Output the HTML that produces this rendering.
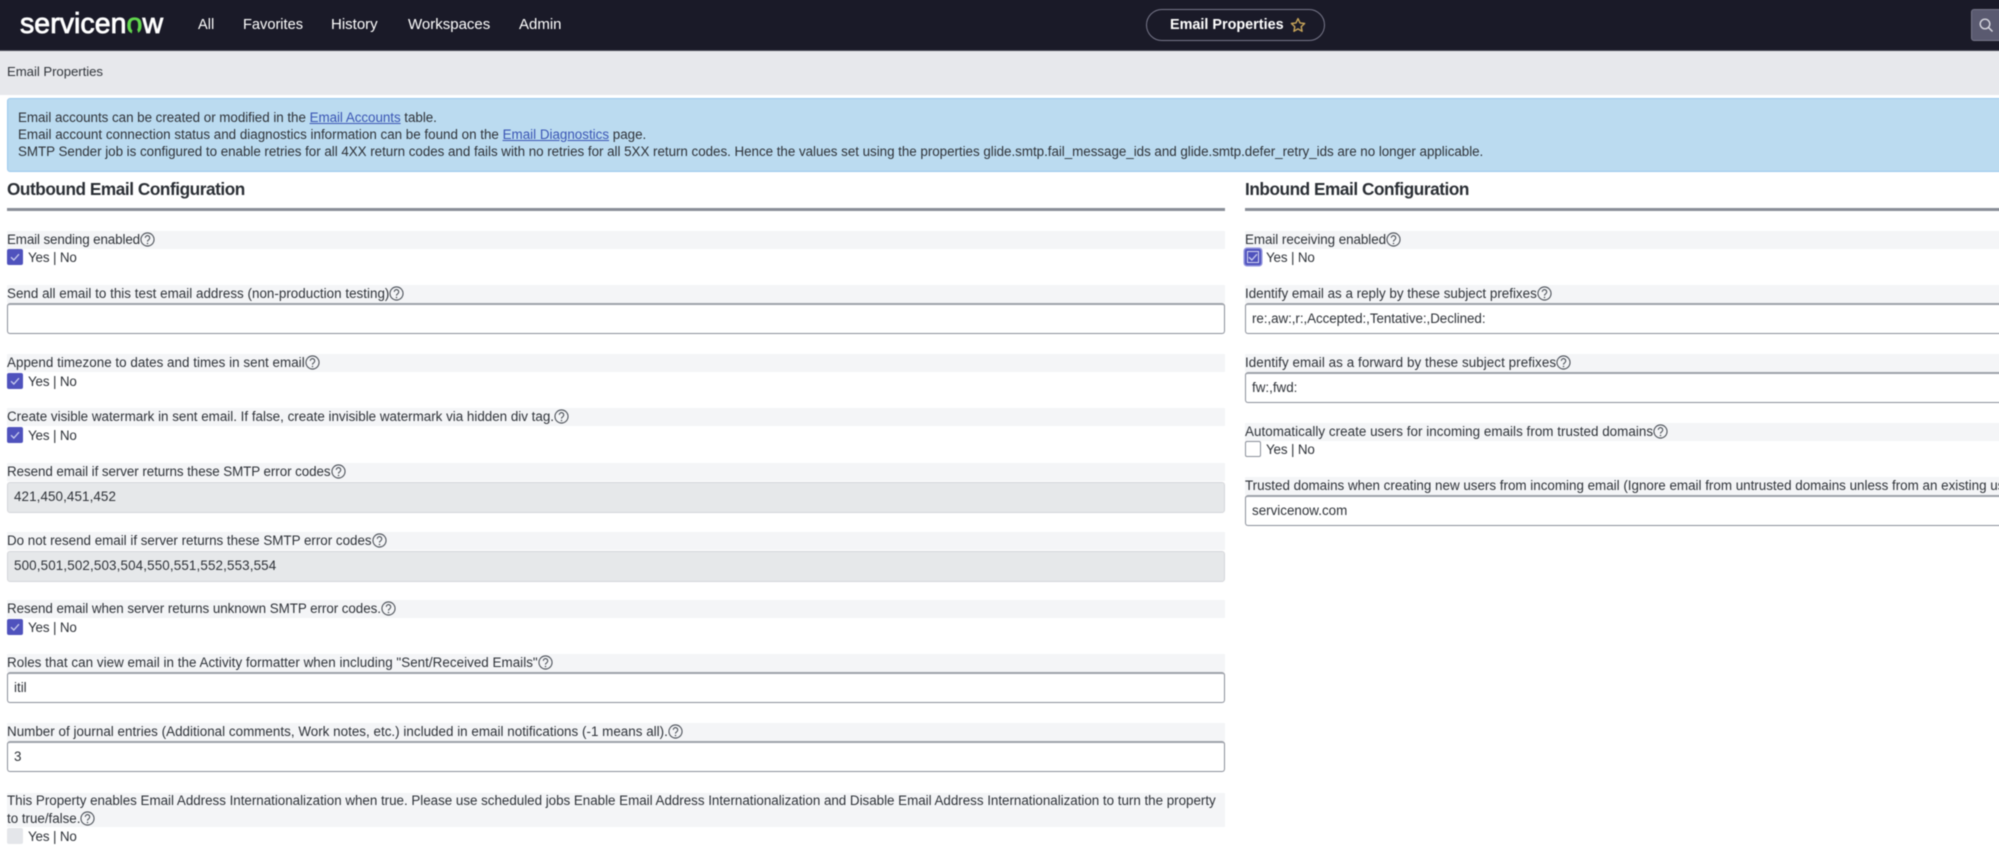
<!DOCTYPE html>
<html lang="en"><head><meta charset="utf-8"><title>Email Properties</title>
<style>
*{box-sizing:border-box}
html,body{margin:0;padding:0;width:1999px;height:860px;overflow:hidden;background:#fff}
body{font-family:"Liberation Sans",sans-serif;font-size:13.4px;color:#2e3238;position:relative}
#p{position:absolute;left:0;top:0;width:1999px;height:860px;filter:blur(.45px)}
#p div,#p span.a,#p svg.a{position:absolute;white-space:nowrap}
.nav{left:-6px;top:-6px;width:2015px;height:57px;background:#1a1a28;border-bottom:1px solid #4a4a55}
.ni{top:15px;color:#fff;font-size:15px;line-height:20px}
.lb{height:18px;background:#f4f5f7;line-height:18px;padding:0}
.l{left:7px;width:1218px}.r{left:1245px;width:770px}
.in{height:31px;background:#fff;border:1px solid #8b909a;border-top:2px solid #9ea2aa;border-radius:3px;line-height:28px;padding-left:6px}
.dis{background:#e6e8ea;border:1px solid #d4d6da}
.cb{width:16px;height:16px;border-radius:2px;background:#4f52bd}
.yn{line-height:17px;letter-spacing:-.15px}
.h{font-weight:bold;font-size:17.2px;color:#2a2e34;top:179px;line-height:20px;letter-spacing:-.44px}
.rule{top:208px;height:3px;background:#8a8e98}
a{color:#3a55b4;text-decoration:underline}
svg.q{display:inline-block;vertical-align:-3px;width:15px;height:15px;margin-left:0}
</style></head><body>
<svg width="0" height="0" style="position:absolute"><symbol id="q" viewBox="0 0 14 14"><circle cx="7" cy="7" r="6.1" fill="none" stroke="#4a4f57" stroke-width="1"/><path d="M4.9 5.5a2.1 2.1 0 1 1 3.3 1.7c-.8.5-1.2.9-1.2 1.8" fill="none" stroke="#4a4f57" stroke-width="1"/><circle cx="7" cy="10.7" r=".7" fill="#4a4f57"/></symbol>
<symbol id="ck" viewBox="0 0 16 16"><path d="M4 8.2l2.8 2.8L12 5.2" fill="none" stroke="#c9ccee" stroke-width="1.3"/></symbol></svg>
<div id="p">
<div class="nav"></div>
<div style="left:20px;top:5px;color:#fff;font-size:28.5px;line-height:38px;letter-spacing:.05px;-webkit-text-stroke:.8px">servicen<span style="color:#62d84e">o</span>w</div>
<div style="left:132px;top:29px;width:6px;height:5px;background:#1a1a28;border-radius:3px 3px 0 0"></div>
<div class="ni" style="left:198px;font-size:14.6px">All</div>
<div class="ni" style="left:243px;font-size:14.6px">Favorites</div>
<div class="ni" style="left:331px">History</div>
<div class="ni" style="left:408px">Workspaces</div>
<div class="ni" style="left:519px">Admin</div>
<div style="left:1146px;top:9px;width:179px;height:32px;border:1.5px solid #77778a;border-radius:16px"></div>
<div style="left:1170px;top:15px;color:#fff;font-weight:bold;font-size:14.4px;line-height:20px">Email Properties</div>
<svg class="a" style="left:1290px;top:17px" width="16" height="16" viewBox="0 0 16 16"><path d="M8 1.6l2 4.3 4.6.6-3.4 3.2.9 4.6L8 11.9l-4.1 2.4.9-4.6L1.4 6.5 6 5.9z" fill="none" stroke="#c8a55a" stroke-width="1.4" stroke-linejoin="round"/></svg>
<div style="left:1971px;top:9px;width:40px;height:32px;background:#5a5a70;border:1px solid #77778a;border-radius:3px"></div>
<svg class="a" style="left:1978px;top:17px" width="16" height="16" viewBox="0 0 16 16"><circle cx="7" cy="7" r="4.8" fill="none" stroke="#d8d8e0" stroke-width="1.4"/><path d="M10.5 10.5l4 4" stroke="#d8d8e0" stroke-width="1.5"/></svg>

<div style="left:-6px;top:51px;width:2015px;height:44px;background:#e7e8ec"></div>
<div style="left:7px;top:63px;line-height:18px;font-size:13.2px;color:#30343a;letter-spacing:-.05px">Email Properties</div>

<div style="left:7px;top:98px;width:2010px;height:74px;background:#bbdbf0;border:1.5px solid #9cc8ec;border-radius:3px"></div>
<div style="left:18px;top:109px;line-height:18px;letter-spacing:-.035px">Email accounts can be created or modified in the <a>Email Accounts</a> table.</div>
<div style="left:18px;top:126px;line-height:18px">Email account connection status and diagnostics information can be found on the <a>Email Diagnostics</a> page.</div>
<div style="left:18px;top:143px;line-height:18px;letter-spacing:-.03px">SMTP Sender job is configured to enable retries for all 4XX return codes and fails with no retries for all 5XX return codes. Hence the values set using the properties glide.smtp.fail_message_ids and glide.smtp.defer_retry_ids are no longer applicable.</div>

<div class="h" style="left:7px">Outbound Email Configuration</div>
<div class="rule" style="left:7px;width:1218px"></div>
<div class="h" style="left:1245px">Inbound Email Configuration</div>
<div class="rule" style="left:1245px;width:770px"></div>

<div class="lb l" style="top:231px;letter-spacing:-.12px">Email sending enabled<svg class="q"><use href="#q"/></svg></div>
<div class="cb" style="left:7px;top:249px"><svg width="16" height="16"><use href="#ck"/></svg></div>
<div class="yn" style="left:28px;top:249px">Yes | No</div>

<div class="lb l" style="top:285px;letter-spacing:.02px">Send all email to this test email address (non-production testing)<svg class="q"><use href="#q"/></svg></div>
<div class="in l" style="top:303px"></div>

<div class="lb l" style="top:354px;letter-spacing:.03px">Append timezone to dates and times in sent email<svg class="q"><use href="#q"/></svg></div>
<div class="cb" style="left:7px;top:373px"><svg width="16" height="16"><use href="#ck"/></svg></div>
<div class="yn" style="left:28px;top:373px">Yes | No</div>

<div class="lb l" style="top:408px">Create visible watermark in sent email. If false, create invisible watermark via hidden div tag.<svg class="q"><use href="#q"/></svg></div>
<div class="cb" style="left:7px;top:427px"><svg width="16" height="16"><use href="#ck"/></svg></div>
<div class="yn" style="left:28px;top:427px">Yes | No</div>

<div class="lb l" style="top:463px;letter-spacing:-.07px">Resend email if server returns these SMTP error codes<svg class="q"><use href="#q"/></svg></div>
<div class="in l dis" style="top:482px;letter-spacing:.1px">421,450,451,452</div>

<div class="lb l" style="top:532px;letter-spacing:-.01px">Do not resend email if server returns these SMTP error codes<svg class="q"><use href="#q"/></svg></div>
<div class="in l dis" style="top:551px;letter-spacing:.14px">500,501,502,503,504,550,551,552,553,554</div>

<div class="lb l" style="top:600px;letter-spacing:-.055px">Resend email when server returns unknown SMTP error codes.<svg class="q"><use href="#q"/></svg></div>
<div class="cb" style="left:7px;top:619px"><svg width="16" height="16"><use href="#ck"/></svg></div>
<div class="yn" style="left:28px;top:619px">Yes | No</div>

<div class="lb l" style="top:654px;letter-spacing:.036px">Roles that can view email in the Activity formatter when including "Sent/Received Emails"<svg class="q"><use href="#q"/></svg></div>
<div class="in l" style="top:672px">itil</div>

<div class="lb l" style="top:723px;letter-spacing:.022px">Number of journal entries (Additional comments, Work notes, etc.) included in email notifications (-1 means all).<svg class="q"><use href="#q"/></svg></div>
<div class="in l" style="top:741px">3</div>

<div class="lb l" style="top:793px;height:34px;line-height:17.5px;letter-spacing:-.019px"><span style="position:relative;top:-1px">This Property enables Email Address Internationalization when true. Please use scheduled jobs Enable Email Address Internationalization and Disable Email Address Internationalization to turn the property<br>to true/false.<svg class="q"><use href="#q"/></svg></span></div>
<div class="cb" style="left:7px;top:828px;background:#e4e6ea"></div>
<div class="yn" style="left:28px;top:828px">Yes | No</div>

<div class="lb r" style="top:231px;letter-spacing:-.05px">Email receiving enabled<svg class="q"><use href="#q"/></svg></div>
<div class="cb" style="left:1245px;top:249px;box-shadow:0 0 0 1.5px #8e90dc"><svg width="16" height="16"><rect x="2.5" y="2.5" width="11" height="11" fill="none" stroke="#d5d6f2"/><use href="#ck"/></svg></div>
<div class="yn" style="left:1266px;top:249px">Yes | No</div>

<div class="lb r" style="top:285px">Identify email as a reply by these subject prefixes<svg class="q"><use href="#q"/></svg></div>
<div class="in r" style="top:303px;letter-spacing:-.06px">re:,aw:,r:,Accepted:,Tentative:,Declined:</div>

<div class="lb r" style="top:354px;letter-spacing:.07px">Identify email as a forward by these subject prefixes<svg class="q"><use href="#q"/></svg></div>
<div class="in r" style="top:372px">fw:,fwd:</div>

<div class="lb r" style="top:423px;letter-spacing:.037px">Automatically create users for incoming emails from trusted domains<svg class="q"><use href="#q"/></svg></div>
<div class="cb" style="left:1245px;top:441px;background:#fff;border:1px solid #8b909a"></div>
<div class="yn" style="left:1266px;top:441px">Yes | No</div>

<div class="lb r" style="top:477px">Trusted domains when creating new users from incoming email (Ignore email from untrusted domains unless from an existing user)<svg class="q"><use href="#q"/></svg></div>
<div class="in r" style="top:495px">servicenow.com</div>
</div>
</body></html>
